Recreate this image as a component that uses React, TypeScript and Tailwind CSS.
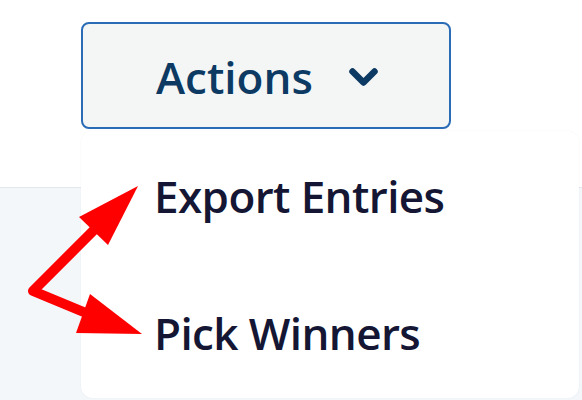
import React from "react";

const font = { fontFamily: '"Open Sans", "Noto Sans", sans-serif' };

const Chevron = () => (
  <svg width="30" height="22" viewBox="0 0 30 22" className="mt-[6px] shrink-0">
    <polyline
      points="3.5,3.5 14.5,14.5 25.5,3.5"
      fill="none"
      stroke="currentColor"
      strokeWidth="6.5"
      strokeLinecap="round"
      strokeLinejoin="round"
    />
  </svg>
);

// red callout arrows pointing at the two menu items
const Arrows = () => (
  <svg
    width="582"
    height="400"
    viewBox="0 0 582 400"
    className="absolute inset-0 pointer-events-none z-30"
  >
    <polyline
      points="96,228 33,291 86,313"
      fill="none"
      stroke="#ff0000"
      strokeWidth="10"
      strokeLinejoin="round"
    />
    <polygon points="138,186 79,217 108,245" fill="#ff0000" />
    <polygon points="142,334 90,294 76,333" fill="#ff0000" />
  </svg>
);

export default function App() {
  const items = ["Export Entries", "Pick Winners"];

  return (
    <div className="relative h-[400px] w-[582px] overflow-hidden bg-[#f3f7fa]" style={font}>
      <div className="h-[188px] bg-white border-b border-[#e3e8ee] pl-[81px] pt-[22px]">
        <button className="relative z-20 flex h-[107px] w-[370px] items-center gap-[36px] rounded-[8px] border-2 border-[#2a6cb6] bg-[#f4f6f6] pl-[73px] text-[#0d3a63]">
          <span className="pt-[3px] text-[44px] font-semibold leading-none">Actions</span>
          <Chevron />
        </button>
      </div>

      <div className="absolute left-[81px] top-[131px] z-10 h-[267px] w-[498px] rounded-xl bg-white shadow-[0_0_2px_rgba(30,50,80,0.06)]">
        <div className="flex flex-col pl-[73px] pt-[35px] text-[#141634]">
          {items.map((label) => (
            <div
              key={label}
              className="h-[137px] text-[44px] font-semibold leading-[60px] tracking-[-0.6px]"
            >
              {label}
            </div>
          ))}
        </div>
      </div>

      <Arrows />
    </div>
  );
}
